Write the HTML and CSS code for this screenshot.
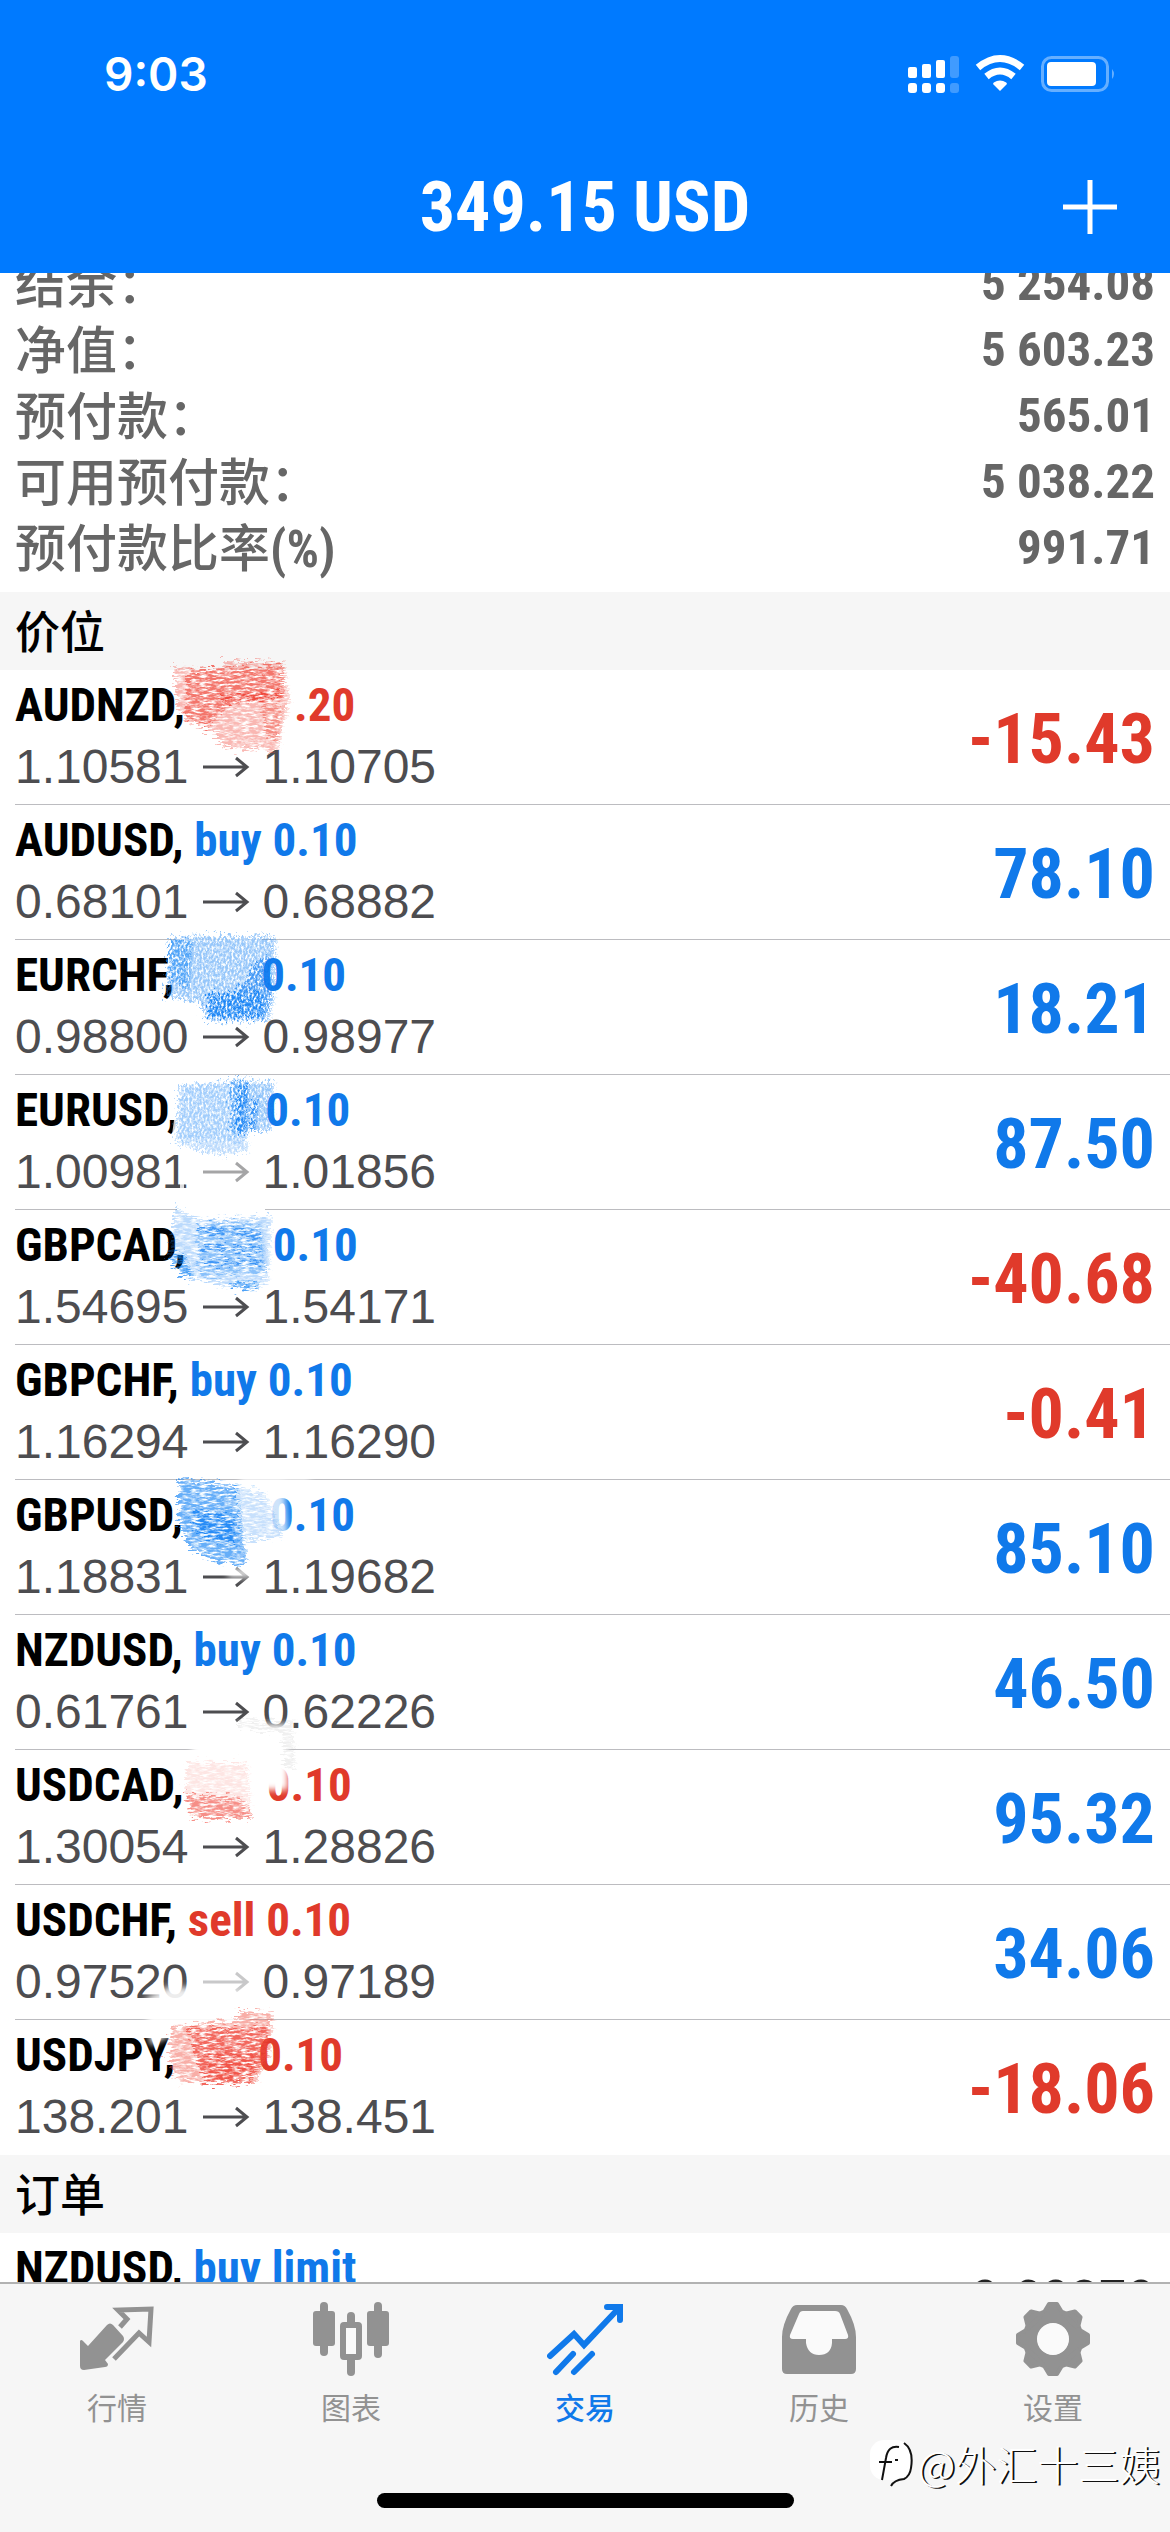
FILE: index.html
```html
<!DOCTYPE html>
<html lang="zh-CN">
<head>
<meta charset="utf-8">
<meta name="viewport" content="width=device-width, initial-scale=1">
<title>交易</title>
<link rel="stylesheet" href="styles.css">
</head>
<body>
<svg class="defs" aria-hidden="true">
  <defs>
    <filter id="crayon-h" x="-10%" y="-10%" width="120%" height="120%">
      <feTurbulence type="fractalNoise" baseFrequency="0.12 0.5" numOctaves="3" seed="4" result="n"/>
      <feColorMatrix in="n" type="matrix" values="0 0 0 0 0  0 0 0 0 0  0 0 0 0 0  3 0 0 0 -0.8" result="m"/>
      <feDisplacementMap in="SourceGraphic" in2="n" scale="20" xChannelSelector="R" yChannelSelector="G" result="d"/>
      <feComposite in="d" in2="m" operator="in"/>
    </filter>
    <filter id="crayon-v" x="-10%" y="-10%" width="120%" height="120%">
      <feTurbulence type="fractalNoise" baseFrequency="0.5 0.3" numOctaves="3" seed="9" result="n"/>
      <feColorMatrix in="n" type="matrix" values="0 0 0 0 0  0 0 0 0 0  0 0 0 0 0  3 0 0 0 -0.8" result="m"/>
      <feDisplacementMap in="SourceGraphic" in2="n" scale="20" xChannelSelector="R" yChannelSelector="G" result="d"/>
      <feComposite in="d" in2="m" operator="in"/>
    </filter>
    <filter id="soft" x="-20%" y="-20%" width="140%" height="140%"><feGaussianBlur stdDeviation="3"/></filter>
    <symbol id="arrow" viewBox="0 0 48 24"><path d="M1 12H45M34 3L45 12L34 21" fill="none" stroke="currentColor" stroke-width="3"/></symbol>
  </defs>
</svg>

<header class="top">
  <div class="status">
    <time class="clock">9:03</time>
    <svg class="status-icons" viewBox="0 0 208 40" aria-hidden="true">
      <g fill="#fff">
        <rect x="0" y="13" width="9" height="11" rx="2"/><rect x="14" y="10" width="9" height="14" rx="2"/><rect x="28" y="6" width="9" height="18" rx="2"/>
        <rect x="0" y="29" width="9" height="10" rx="3"/><rect x="14" y="29" width="9" height="10" rx="3"/><rect x="28" y="29" width="9" height="10" rx="3"/>
        <g opacity=".25"><rect x="42" y="2" width="9" height="22" rx="3"/><rect x="42" y="29" width="9" height="10" rx="3"/></g>
        <path d="M92 37L85.500 30.500Q84.500 29.500 85.800 28.500Q92 24.500 98.200 28.500Q99.500 29.500 98.500 30.500Z"/>
        <rect x="139" y="8" width="49" height="24" rx="4"/>
        <path d="M204 15Q208 20 204 25Z" opacity=".4"/>
      </g>
      <g fill="none" stroke="#fff" stroke-width="7">
        <path d="M70 13.500Q92 -4.500 114 13.500"/><path d="M78.500 22.500Q92 11.500 105.500 22.500"/>
      </g>
      <rect x="134.500" y="3.500" width="65" height="33" rx="9" fill="none" stroke="#fff" stroke-width="3" opacity=".4"/>
    </svg>
  </div>
  <div class="nav">
    <h1 class="title">349.15 USD</h1>
    <button class="add" type="button" aria-label="新订单"><svg viewBox="0 0 56 56" aria-hidden="true"><path d="M28 1V55M1 28H55" stroke="#fff" stroke-width="5"/></svg></button>
  </div>
</header>

<main class="content">
  <dl class="summary">
    <div class="sum-row"><dt>结余：</dt><dd>5 254.08</dd></div>
    <div class="sum-row"><dt>净值：</dt><dd>5 603.23</dd></div>
    <div class="sum-row"><dt>预付款：</dt><dd>565.01</dd></div>
    <div class="sum-row"><dt>可用预付款：</dt><dd>5 038.22</dd></div>
    <div class="sum-row"><dt>预付款比率<span class="narrow">(%)</span></dt><dd>991.71</dd></div>
  </dl>

  <h2 class="section">价位</h2>
  <ul class="list">
    <li class="row">
      <div class="info">
        <p class="deal">AUDNZD,<span class="gap gap-wide"></span><span class="sell">.20</span></p>
        <p class="price">1.10581<svg class="arrow"><use href="#arrow"/></svg>1.10705</p>
      </div>
      <strong class="profit loss">-15.43</strong>
      <svg class="scribble" viewBox="0 0 320 135" aria-hidden="true">
        <g filter="url(#crayon-h)" fill="#f0493c">
          <path d="M174 -4L222 0L222 -9H284V0L290 30L282 56L279 80L224 78L214 60L190 55L178 38Z" opacity=".4"/>
          <path d="M190 0L284 -4L284 28L230 34L208 58L186 46Z" opacity=".6"/>
          <path d="M220 25L284 22L280 28L222 30Z"/>
          <path d="M264 30L284 34L278 72L266 66Z" opacity=".4"/>
        </g>
      </svg>
    </li>
    <li class="row">
      <div class="info">
        <p class="deal">AUDUSD, <span class="buy">buy 0.10</span></p>
        <p class="price">0.68101<svg class="arrow"><use href="#arrow"/></svg>0.68882</p>
      </div>
      <strong class="profit buy">78.10</strong>
    </li>
    <li class="row">
      <div class="info">
        <p class="deal">EURCHF,<span class="gap"></span><span class="buy">0.10</span></p>
        <p class="price">0.98800<svg class="arrow"><use href="#arrow"/></svg>0.98977</p>
      </div>
      <strong class="profit buy">18.21</strong>
      <svg class="scribble" viewBox="0 0 320 135" aria-hidden="true">
        <path d="M176 -3H262V60H176Z" fill="#fff" opacity=".8"/>
        <g filter="url(#crayon-v)" fill="#1683f5">
          <path d="M170 -3L276 -4L276 40L270 80L208 82L200 62L166 56L168 24Z" opacity=".45"/>
          <path d="M170 0L194 2L190 50L172 40Z" opacity=".5"/>
          <path d="M270 16L274 50L268 76L210 78L208 56L238 52L256 24Z" opacity=".65"/>
          <path d="M210 54L266 52L264 78L210 78Z" opacity=".8"/>
        </g>
      </svg>
    </li>
    <li class="row">
      <div class="info">
        <p class="deal">EURUSD,<span class="gap"></span><span class="buy">0.10</span></p>
        <p class="price">1.00981<svg class="arrow worn"><use href="#arrow"/></svg>1.01856</p>
      </div>
      <strong class="profit buy">87.50</strong>
      <svg class="scribble" viewBox="0 0 320 135" aria-hidden="true">
        <path d="M176 30L184 20V120H180V60H172Z" fill="#fff" opacity=".8"/>
        <g filter="url(#crayon-v)" fill="#1683f5">
          <path d="M180 10L230 8L246 4L248 76L218 80L176 68Z" opacity=".3"/>
          <path d="M184 10L246 6L246 66L180 66Z" opacity=".15"/>
          <path d="M232 4L274 8L272 56L250 56L232 60Z" opacity=".45"/>
          <path d="M240 12L250 8L248 60L238 56ZM254 26L260 24L256 56L250 56Z" opacity=".8"/>
        </g>
      </svg>
    </li>
    <li class="row">
      <div class="info">
        <p class="deal">GBPCAD,<span class="gap"></span><span class="buy">0.10</span></p>
        <p class="price">1.54695<svg class="arrow"><use href="#arrow"/></svg>1.54171</p>
      </div>
      <strong class="profit loss">-40.68</strong>
      <svg class="scribble" viewBox="0 0 320 135" aria-hidden="true">
        <path d="M177 -4H265V3H177Z" fill="#fff"/>
        <g filter="url(#crayon-h)" fill="#1683f5">
          <path d="M177 -9L180 0L204 10L272 6L268 70L258 80L232 78L186 66L168 48Z" opacity=".3"/>
          <path d="M198 14L262 12L268 62L200 66Z" opacity=".3"/>
          <path d="M198 16L262 22V29L200 22ZM168 50L184 42L194 66L186 70ZM204 36H262V41H204ZM206 50H264V55H206ZM232 72H258V78H234Z" opacity=".65"/>
        </g>
      </svg>
    </li>
    <li class="row">
      <div class="info">
        <p class="deal">GBPCHF, <span class="buy">buy 0.10</span></p>
        <p class="price">1.16294<svg class="arrow"><use href="#arrow"/></svg>1.16290</p>
      </div>
      <strong class="profit loss">-0.41</strong>
    </li>
    <li class="row">
      <div class="info">
        <p class="deal">GBPUSD,<span class="gap"></span><span class="buy">0.10</span></p>
        <p class="price">1.18831<svg class="arrow"><use href="#arrow"/></svg>1.19682</p>
      </div>
      <strong class="profit buy">85.10</strong>
      <svg class="scribble" viewBox="0 0 320 135" aria-hidden="true">
        <path d="M240 -4H310V2H284L288 56H240ZM228 88H252V98H228Z" fill="#fff" filter="url(#soft)" opacity=".8"/>
        <g filter="url(#crayon-h)" fill="#1683f5">
          <path d="M236 6L264 12L284 56L254 60L240 62Z" opacity=".25"/>
          <path d="M178 -3L238 6L244 62L248 84L216 82L190 68L180 44Z" opacity=".65"/>
          <path d="M194 28L236 36L238 64L196 54Z" opacity=".8"/>
        </g>
      </svg>
    </li>
    <li class="row">
      <div class="info">
        <p class="deal">NZDUSD, <span class="buy">buy 0.10</span></p>
        <p class="price">0.61761<svg class="arrow"><use href="#arrow"/></svg>0.62226</p>
      </div>
      <strong class="profit buy">46.50</strong>
    </li>
    <li class="row">
      <div class="info">
        <p class="deal">USDCAD,<span class="gap gap-tight"></span><span class="sell">0.10</span></p>
        <p class="price">1.30054<svg class="arrow"><use href="#arrow"/></svg>1.28826</p>
      </div>
      <strong class="profit buy">95.32</strong>
      <svg class="scribble" viewBox="0 0 320 135" aria-hidden="true">
        <path d="M192 -14L240 -26L288 -26V40H192Z" fill="#fff" filter="url(#soft)"/>
        <g filter="url(#crayon-h)">
          <path d="M240 -30L294 -30L296 18L286 18L282 -18L240 -22Z" fill="#999" opacity=".15"/>
          <path d="M188 12L248 14L252 68L192 68L186 46Z" fill="#f0493c" opacity=".15"/>
          <path d="M186 44L240 48L252 60L252 69L194 68Z" fill="#f0493c" opacity=".55"/>
        </g>
      </svg>
    </li>
    <li class="row">
      <div class="info">
        <p class="deal">USDCHF, <span class="sell">sell 0.10</span></p>
        <p class="price">0.97520<svg class="arrow faded"><use href="#arrow"/></svg>0.97189</p>
      </div>
      <strong class="profit buy">34.06</strong>
    </li>
    <li class="row">
      <div class="info">
        <p class="deal">USDJPY,<span class="gap gap-tight"></span><span class="sell">0.10</span></p>
        <p class="price">138.201<svg class="arrow"><use href="#arrow"/></svg>138.451</p>
      </div>
      <strong class="profit loss">-18.06</strong>
      <svg class="scribble" viewBox="0 0 320 135" aria-hidden="true">
        <path d="M146 -22L170 -34L240 -28L250 4L174 14L150 26L148 10Z" fill="#fff" filter="url(#soft)" opacity=".9"/>
        <g filter="url(#crayon-h)" fill="#f0493c">
          <path d="M172 6L238 0L240 -10L274 -6L270 32L256 64L178 62L168 36Z" opacity=".45"/>
          <path d="M190 8L270 6L268 36L250 64L206 62L196 40Z" opacity=".7"/>
          <path d="M210 36L260 34L250 60L212 58Z" opacity=".6"/>
        </g>
      </svg>
    </li>
  </ul>

  <h2 class="section">订单</h2>
  <ul class="list">
    <li class="row">
      <div class="info"><p class="deal">NZDUSD, <span class="buy">buy limit</span></p></div>
      <span class="quote">0.60370</span>
    </li>
  </ul>
</main>

<footer class="bottom">
  <nav class="tabs">
    <a class="tab" href="#quotes">
      <svg viewBox="0 0 76 76" aria-hidden="true"><path d="M1 40Q2 38 4 40L9 45L28 24Q31 21 34 24L44 35Q46 38 44 41L26 59L29 63Q29 66 26 66L5 69Q1 69 1 65Z" fill="currentColor"/><path d="M41 26L48 18L39 9L72 8L70 41L60 32L35 58" fill="none" stroke="currentColor" stroke-width="5"/></svg>
      <span>行情</span></a>
    <a class="tab" href="#charts">
      <svg viewBox="0 0 76 76" aria-hidden="true"><g fill="currentColor"><rect x="0" y="10" width="22" height="35" rx="3"/><rect x="7" y="1" width="8" height="54" rx="4"/><rect x="54" y="10" width="22" height="35" rx="3"/><rect x="61" y="1" width="8" height="56" rx="4"/><rect x="34" y="11" width="8" height="64" rx="4"/></g><rect x="30" y="24" width="16" height="32" rx="1" fill="#fafafa" stroke="currentColor" stroke-width="6"/></svg>
      <span>图表</span></a>
    <a class="tab active" href="#trade" aria-current="page">
      <svg viewBox="0 0 76 76" aria-hidden="true"><g fill="none" stroke="currentColor" stroke-width="6" stroke-linecap="round"><path d="M3 55L27 33L37 44L72 7" stroke-linejoin="miter"/><path d="M60 6H73V19"/><path d="M9 71L26 53M27 71L45 53"/></g></svg>
      <span>交易</span></a>
    <a class="tab" href="#history">
      <svg viewBox="0 0 76 76" aria-hidden="true"><path fill="currentColor" d="M16 4H60Q64 4 66 8Q75 24 75 36V68Q75 73 70 73H6Q1 73 1 68V36Q1 24 10 8Q12 4 16 4Z"/><path fill="#fafafa" d="M22 10Q19 10 18 13L9 34Q8 38 12 38H25V42Q27 54 38 54Q50 54 51 42V38H64Q68 38 67 34L59 13Q58 10 54 10Z"/></svg>
      <span>历史</span></a>
    <a class="tab" href="#settings">
      <svg viewBox="0 0 76 76" aria-hidden="true"><circle cx="38" cy="38" r="23" fill="none" stroke="currentColor" stroke-width="15"/><g fill="currentColor" stroke="currentColor" stroke-width="4" stroke-linejoin="round"><path id="tooth" d="M28 13L34 3H42L48 13Z"/><use href="#tooth" transform="rotate(45 38 38)"/><use href="#tooth" transform="rotate(90 38 38)"/><use href="#tooth" transform="rotate(135 38 38)"/><use href="#tooth" transform="rotate(180 38 38)"/><use href="#tooth" transform="rotate(225 38 38)"/><use href="#tooth" transform="rotate(270 38 38)"/><use href="#tooth" transform="rotate(315 38 38)"/></g><circle cx="38" cy="38" r="16" fill="#fafafa"/></svg>
      <span>设置</span></a>
  </nav>
  <div class="home"></div>
  <div class="watermark">
    <svg viewBox="0 0 44 50" aria-hidden="true"><rect x="0" y="2" width="40" height="40" rx="14" fill="#fff"/><path d="M29 9Q18 7 16 20L12 42M9 24H22M25 22H28M34 5Q44 12 41 30Q40 38 34 41Q24 42 21 48" fill="none" stroke="#111" stroke-width="2"/></svg>
    <span>@外汇十三姨</span>
  </div>
</footer>
</body>
</html>
```
FILE: styles.css
```css
* { box-sizing: border-box; margin: 0; padding: 0; }

body {
  display: flex;
  flex-direction: column;
  height: 100vh;
  overflow: hidden;
  background: #fff;
  color: #000;
  font-family: "Liberation Sans", "Noto Sans CJK SC", sans-serif;
}

.defs { position: absolute; width: 0; height: 0; }

/* header */
.top { flex: none; background: #007aff; color: #fff; }
.status {
  display: flex;
  justify-content: space-between;
  align-items: center;
  padding: 54px 54px 0 104px;
}
.clock { font: 600 46px/40px Inter, sans-serif; }
.status-icons { width: 208px; height: 40px; }
.nav {
  display: grid;
  grid-template-columns: 1fr auto 1fr;
  align-items: center;
  height: 179px;
  padding: 56px 52px 10px;
}
.title {
  grid-column: 2;
  font: 700 70px/80px "Roboto Condensed", Roboto, sans-serif;
}
.add { justify-self: end; width: 56px; height: 56px; border: 0; background: none; }
.add svg { display: block; width: 56px; height: 56px; }

/* scrolled content */
.content { flex: 1; min-height: 0; overflow: hidden; }
.summary { margin-top: -23px; padding-bottom: 12px; color: #666; }
.sum-row { display: flex; justify-content: space-between; height: 66px; padding: 0 15px; }
.sum-row dt { font: 500 51px/62px "Noto Sans CJK SC", sans-serif; }
.sum-row dd { font: 700 49px/68px "Roboto Condensed", Roboto, sans-serif; }
.narrow { font: 700 51px/50px "Roboto Condensed", Roboto, sans-serif; }

.section {
  padding: 0 15px;
  background: #f6f6f6;
  font: 500 45px/76px "Noto Sans CJK SC", sans-serif;
  height: 78px;
}

.list { list-style: none; }
.row {
  position: relative;
  display: flex;
  justify-content: space-between;
  align-items: center;
  height: 135px;
  margin-left: 15px;
  padding-right: 15px;
  border-bottom: 1px solid #bcbcc0;
}
.row:last-child { border-bottom-color: transparent; }
.deal { font: 700 47px/62px "Roboto Condensed", Roboto, sans-serif; }
.price { color: #4d4d50; font-size: 48px; line-height: 62px; }
.info { align-self: flex-start; padding-top: 4px; }
.gap { display: inline-block; width: 87px; }
.gap-tight { width: 83px; }
.gap-wide { width: 109px; }
.arrow { width: 48px; height: 24px; margin: 0 13px 4px; }
.worn { opacity: 0.5; }
.faded { opacity: 0.3; }
.profit { padding-top: 4px; font: 700 70px/80px "Roboto Condensed", Roboto, sans-serif; }
.buy { color: #1079ea; }
.sell, .loss { color: #e03a2b; }
.quote { align-self: flex-start; padding-top: 36px; color: #222; font-size: 51px; line-height: 60px; }
.scribble {
  position: absolute;
  top: 0;
  left: -15px;
  width: 320px;
  height: 135px;
  overflow: visible;
}

/* tab bar */
.bottom {
  position: relative;
  flex: none;
  height: 250px;
  border-top: 2px solid #b2b2b2;
  background: #f6f6f6;
}
.tabs { display: grid; grid-template-columns: repeat(5, 1fr); padding-top: 17px; }
.tab {
  display: flex;
  flex-direction: column;
  align-items: center;
  gap: 8px;
  color: #929292;
  text-decoration: none;
  font: 400 30px/42px "Noto Sans CJK SC", sans-serif;
}
.tab svg { width: 76px; height: 76px; }
.active { color: #1079ea; font-weight: 500; }
.home { width: 417px; height: 15px; margin: 66px auto 0; border-radius: 8px; background: #000; }
.watermark {
  position: absolute;
  right: 10px;
  bottom: 39px;
  display: flex;
  align-items: center;
  gap: 4px;
  color: #fff;
  font: 300 41px/60px "Noto Sans CJK SC", sans-serif;
  text-shadow: 2px 1px 0 #111;
}
.watermark svg { width: 44px; height: 50px; }
```
